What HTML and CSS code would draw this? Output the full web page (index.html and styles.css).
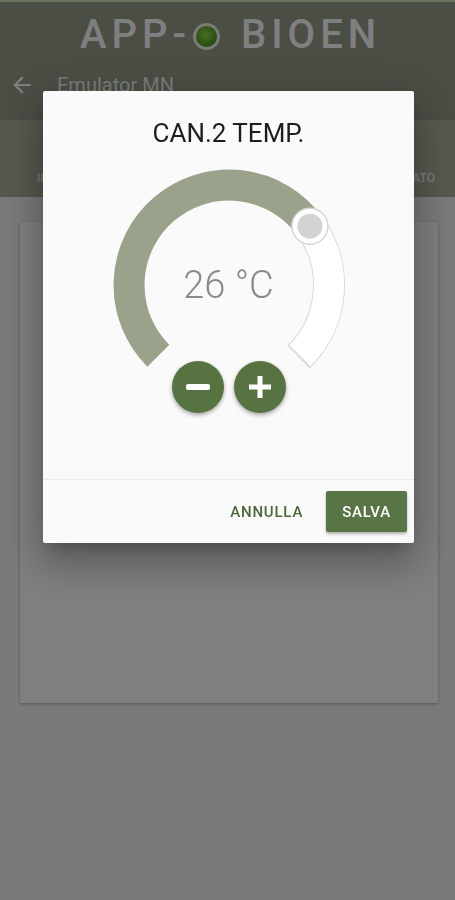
FILE: index.html
```html
<!DOCTYPE html>
<html lang="it">
<head>
    <meta charset="UTF-8">
    <meta name="viewport" content="width=device-width, initial-scale=1.0">
    <title>APP-O BIOEN - Emulator MN</title>
    <link rel="stylesheet" href="styles.css">
</head>
<body>

    <header class="appbar">
        <div class="brand">APP-<span class="led"></span> BIOEN</div>
        <div class="toolbar">
            <svg class="back" viewBox="0 0 24 24" width="26" height="26">
                <path d="M20 11H7.830l5.59-5.59L12 4l-8 8 8 8 1.41-1.41L7.83 13H20v-2z"/>
            </svg>
            <span class="toolbar-title">Emulator MN</span>
        </div>
    </header>

    <nav class="tabs">
        <a href="#info">INFORMAZIONI</a>
        <a href="#uscite">USCITE</a>
        <a href="#avanzato">AVANZATO</a>
    </nav>

    <main class="content">
        <div class="card"></div>
    </main>

    <div class="scrim">
        <div class="dialog">
            <h2 class="dialog-title">CAN.2 TEMP.</h2>

            <div class="dial">
                <svg class="dial-ring" viewBox="0 0 240 196" width="240" height="196">
                    <!-- remaining track -->
                    <path d="M200.9 61.2 A100 100 0 0 1 189.47 191.93" stroke="#dadada" stroke-width="32" fill="none"/>
                    <path d="M200.9 61.2 A100 100 0 0 1 190.71 190.71" stroke="#fff" stroke-width="30" fill="none"/>
                    <!-- value arc -->
                    <path d="M49.29 190.71 A100 100 0 1 1 200.9 61.2" stroke="#9aa28b" stroke-width="31" fill="none"/>
                    <!-- knob -->
                    <circle cx="200.9" cy="61.2" r="18" fill="#fff" stroke="#d6d6d6" stroke-width="1.5"/>
                    <circle cx="200.9" cy="61.2" r="12.5" fill="#d2d2d2"/>
                </svg>
                <div class="dial-value">26 °C</div>
            </div>

            <div class="steppers">
                <button class="step" aria-label="meno">
                    <svg viewBox="0 0 24 24" width="24" height="24"><rect x="0" y="9" width="24" height="6" rx="2" fill="#fff"/></svg>
                </button>
                <button class="step" aria-label="più">
                    <svg viewBox="0 0 22 22" width="22" height="22"><path d="M11 0v22M0 11h22" stroke="#fff" stroke-width="5"/></svg>
                </button>
            </div>

            <div class="actions">
                <button class="btn-text">ANNULLA</button>
                <button class="btn-main">SALVA</button>
            </div>
        </div>
    </div>

</body>
</html>
```

FILE: styles.css
```css
body {
    margin: 0;
    padding: 0;
    font-family: Roboto, "Noto Sans", sans-serif;
    background-color: #f4f4f4;
    min-height: 900px;
}

.appbar {
    background-color: #949c8a;
    border-top: 2px solid #d6eac0;
    height: 118px;
    display: flex;
    flex-direction: column;
}

.brand {
    margin-top: 10px;
    height: 46px;
    line-height: 46px;
    text-align: center;
    color: #fff;
    font-size: 40px;
    font-weight: 500;
    letter-spacing: 5px;
    padding-left: 6px;
}

.led {
    display: inline-block;
    width: 21px;
    height: 21px;
    border: 3px solid #f2f2ee;
    border-radius: 50%;
    vertical-align: -2px;
    margin: 0 6px 0 2px;
    background: radial-gradient(circle at 45% 40%, #8ede4c, #5aa828 55%, #3c7818);
}

.toolbar {
    height: 54px;
    display: flex;
    align-items: center;
    padding-left: 9px;
    gap: 22px;
}

.back {
    fill: #fff;
}

.toolbar-title {
    color: rgba(255, 255, 255, 0.92);
    font-size: 20px;
}

.tabs {
    background-color: #acb29f;
    height: 77px;
    box-sizing: border-box;
    display: flex;
    justify-content: space-between;
    align-items: flex-end;
    padding: 0 20px 12px 37px;
}

.tabs a {
    color: rgba(255, 255, 255, 0.9);
    text-decoration: none;
    font-size: 12px;
    font-weight: 500;
    line-height: 14px;
}

.content {
    padding: 25px 17px 0 20px;
}

.card {
    height: 481px;
    background-color: #fff;
    box-shadow: 0 1px 3px rgba(0, 0, 0, 0.3);
}

/* dialog overlay */
.scrim {
    position: fixed;
    top: 0;
    left: 0;
    right: 0;
    bottom: 0;
    background-color: rgba(0, 0, 0, 0.5);
    display: flex;
    justify-content: center;
    align-items: flex-start;
    padding: 91px 0 0 2px;
    box-sizing: border-box;
}

.dialog {
    width: 371px;
    background-color: #fafafa;
    border-radius: 2px;
    box-shadow: 0 11px 15px -7px rgba(0, 0, 0, 0.25), 0 24px 38px 3px rgba(0, 0, 0, 0.16), 0 9px 46px 8px rgba(0, 0, 0, 0.14);
}

.dialog-title {
    margin: 0;
    padding-top: 27px;
    line-height: 30px;
    font-size: 26px;
    font-weight: 400;
    text-align: center;
    color: #1e1e1e;
}

.dial {
    position: relative;
    width: 240px;
    height: 196px;
    margin: 17px auto 0;
}

.dial-ring {
    display: block;
    overflow: visible;
}

.dial-value {
    position: absolute;
    top: 96px;
    left: 0;
    width: 100%;
    line-height: 48px;
    text-align: center;
    font-size: 38px;
    font-weight: 300;
    color: #8a8a8a;
}

.steppers {
    display: flex;
    justify-content: center;
    gap: 10px;
}

.step {
    width: 52px;
    height: 52px;
    border: none;
    border-radius: 50%;
    background-color: #587342;
    box-shadow: 0 2px 4px rgba(0, 0, 0, 0.35);
    display: flex;
    align-items: center;
    justify-content: center;
    padding: 0;
}

.actions {
    margin-top: 66px;
    border-top: 1px solid #ececec;
    display: flex;
    justify-content: flex-end;
    align-items: center;
    gap: 23px;
    padding: 11px 7px;
}

.btn-text,
.btn-main {
    font-family: Roboto, "Noto Sans", sans-serif;
    font-size: 15px;
    font-weight: 500;
    letter-spacing: 0.8px;
    border: none;
}

.btn-text {
    background: none;
    color: #4b6737;
    padding: 0;
}

.btn-main {
    height: 41px;
    padding: 0 16px;
    background-color: #5a7545;
    color: #fff;
    border-radius: 2px;
    box-shadow: 0 2px 3px rgba(0, 0, 0, 0.3);
}
```
